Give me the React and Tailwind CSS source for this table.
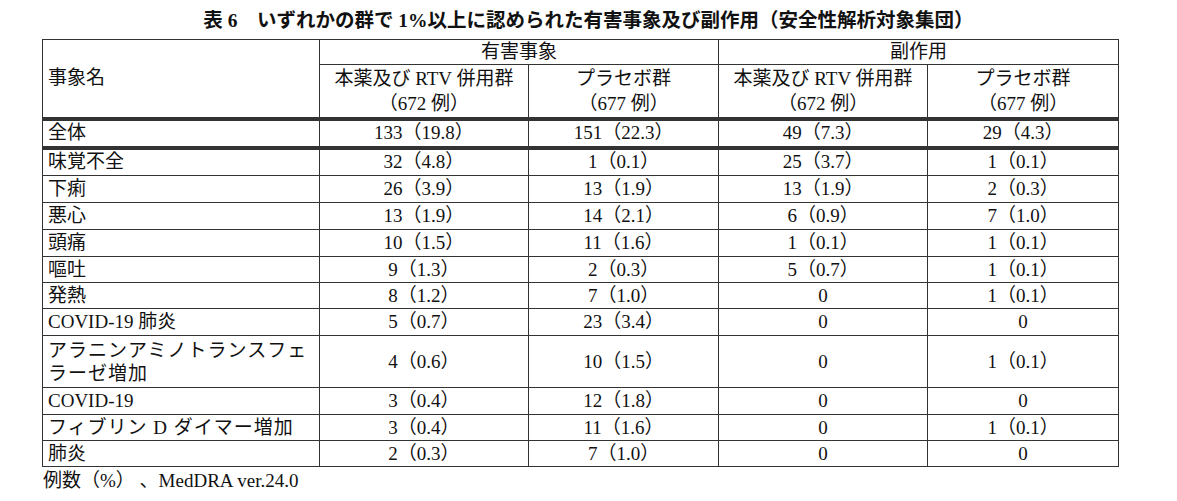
import React from 'react';

const rows = [
  { name: '全体', h: 'h-[29px]', v: ['133（19.8）', '151（22.3）', '49（7.3）', '29（4.3）'], dbl: true },
  { name: '味覚不全', h: 'h-[28px]', v: ['32（4.8）', '1（0.1）', '25（3.7）', '1（0.1）'] },
  { name: '下痢', h: 'h-[27px]', v: ['26（3.9）', '13（1.9）', '13（1.9）', '2（0.3）'] },
  { name: '悪心', h: 'h-[27px]', v: ['13（1.9）', '14（2.1）', '6（0.9）', '7（1.0）'] },
  { name: '頭痛', h: 'h-[27px]', v: ['10（1.5）', '11（1.6）', '1（0.1）', '1（0.1）'] },
  { name: '嘔吐', h: 'h-[26px]', v: ['9（1.3）', '2（0.3）', '5（0.7）', '1（0.1）'] },
  { name: '発熱', h: 'h-[26px]', v: ['8（1.2）', '7（1.0）', '0', '1（0.1）'] },
  { name: 'COVID-19 肺炎', h: 'h-[27px]', v: ['5（0.7）', '23（3.4）', '0', '0'] },
  {
    name: (
      <span className="tracking-[1px] leading-[23px] block">
        アラニンアミノトランスフェ
        <br />
        ラーゼ増加
      </span>
    ),
    h: 'h-[52px]',
    v: ['4（0.6）', '10（1.5）', '0', '1（0.1）'],
  },
  { name: 'COVID-19', h: 'h-[27px]', v: ['3（0.4）', '12（1.8）', '0', '0'] },
  {
    name: <span className="tracking-[1px]">フィブリン D ダイマー増加</span>,
    h: 'h-[26px]',
    v: ['3（0.4）', '11（1.6）', '0', '1（0.1）'],
  },
  { name: '肺炎', h: 'h-[26px]', v: ['2（0.3）', '7（1.0）', '0', '0'] },
];

const cell = 'border border-[#333] px-[5px] py-0 align-middle';

const App = () => {
  return (
    <div className="w-[1177px] h-[501px] bg-white text-[#111] text-[19px] font-['Liberation_Serif','Noto_Sans_CJK_JP',serif]">
      <div className="h-[39px] flex items-center justify-center pt-[2px] font-bold text-[19.5px]">
        表 6　いずれかの群で 1%以上に認められた有害事象及び副作用（安全性解析対象集団）
      </div>
      <table className="ml-[42px] w-[1076px] table-fixed border-collapse">
        <colgroup>
          <col className="w-[277px]" />
          <col className="w-[209px]" />
          <col className="w-[190px]" />
          <col className="w-[209px]" />
          <col className="w-[191px]" />
        </colgroup>
        <thead>
          <tr className="h-[25px] leading-[22px]">
            <td rowSpan={2} className={`${cell} text-left border-b-4 border-b-double`}>
              事象名
            </td>
            <td colSpan={2} className={`${cell} text-center`}>
              有害事象
            </td>
            <td colSpan={2} className={`${cell} text-center`}>
              副作用
            </td>
          </tr>
          <tr className="h-[54px] leading-[25px]">
            <td className={`${cell} text-center border-b-4 border-b-double`}>
              本薬及び RTV 併用群
              <br />
              （672 例）
            </td>
            <td className={`${cell} text-center border-b-4 border-b-double`}>
              プラセボ群
              <br />
              （677 例）
            </td>
            <td className={`${cell} text-center border-b-4 border-b-double`}>
              本薬及び RTV 併用群
              <br />
              （672 例）
            </td>
            <td className={`${cell} text-center border-b-4 border-b-double`}>
              プラセボ群
              <br />
              （677 例）
            </td>
          </tr>
        </thead>
        <tbody>
          {rows.map((r, i) => (
            <tr key={i} className={`${r.h} leading-[22px]`}>
              <td className={`${cell} text-left ${r.dbl ? 'border-b-4 border-b-double' : ''}`}>{r.name}</td>
              {r.v.map((x, j) => (
                <td key={j} className={`${cell} text-center ${r.dbl ? 'border-b-4 border-b-double' : ''}`}>
                  {x}
                </td>
              ))}
            </tr>
          ))}
        </tbody>
      </table>
      <div className="ml-[43px] mt-[2px] leading-[24px]">例数（%） 、MedDRA ver.24.0</div>
    </div>
  );
};

export default App;
